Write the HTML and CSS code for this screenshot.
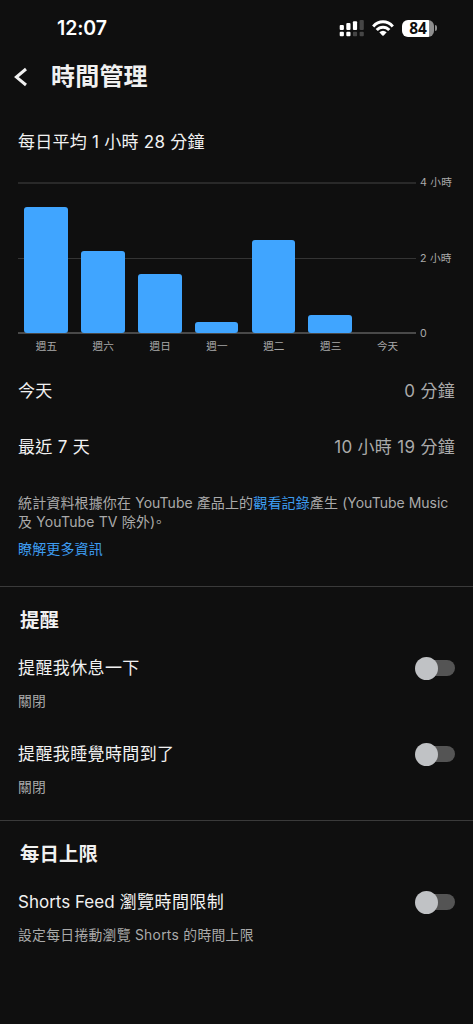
FILE: index.html
```html
<!DOCTYPE html>
<html lang="zh-Hant">
<head>
<meta charset="utf-8">
<meta name="viewport" content="width=device-width, initial-scale=1">
<title>時間管理</title>
<link rel="stylesheet" href="styles.css">
</head>
<body>
<div class="screen">
  <div class="status">
    <span class="clock">12:07</span>
    <div class="status-icons">
      <svg class="signal" width="25" height="18" viewBox="0 0 25 18">
        <g fill="#fff"><rect x="0.7" y="6" width="4.2" height="5" rx="1"/><rect x="7.3" y="4" width="4.2" height="7" rx="1"/><rect x="13.9" y="2.2" width="4.2" height="8.8" rx="1"/><rect x="0.7" y="12.8" width="4.2" height="4.4" rx="1"/><rect x="7.3" y="12.8" width="4.2" height="4.4" rx="1"/></g>
        <g fill="#464646"><rect x="20.6" y="1" width="4.2" height="10" rx="1"/><rect x="13.9" y="12.8" width="4.2" height="4.4" rx="1"/><rect x="20.6" y="12.8" width="4.2" height="4.4" rx="1"/></g>
      </svg>
      <svg class="wifi" width="22" height="18" viewBox="0 0 22 18">
        <g fill="none" stroke="#fff" stroke-width="3"><path d="M1.2 7.4C6.8 1.3 15.2 1.3 20.8 7.4"/><path d="M4.7 11.1C8.3 7.2 13.7 7.2 17.3 11.1"/></g>
        <path fill="#fff" d="M7.3 13.3Q11 10.2 14.7 13.3L11.7 16.5Q11 17.2 10.3 16.5Z"/>
      </svg>
      <div class="battery"><span class="battery-level">84</span></div>
      <span class="battery-tip"></span>
    </div>
  </div>
  <header class="topbar">
    <svg class="back" width="16" height="20" viewBox="0 0 16 20"><path d="M13 2 3.4 10.1 13 18" fill="none" stroke="#f1f1f1" stroke-width="3"/></svg>
    <h1 class="title">時間管理</h1>
  </header>
  <p class="average">每日平均 1 小時 28 分鐘</p>
  <div class="chart">
    <div class="plot">
      <div class="lines"><i></i><i></i><i></i></div>
      <div class="bars">
        <b style="height:126px"></b><b style="height:82px"></b><b style="height:59px"></b><b style="height:11px"></b><b style="height:93px"></b><b style="height:18px"></b><b style="height:0"></b>
      </div>
    </div>
    <div class="scale"><span>4 小時</span><span>2 小時</span><span>0</span></div>
    <div class="days"><span>週五</span><span>週六</span><span>週日</span><span>週一</span><span>週二</span><span>週三</span><span>今天</span></div>
  </div>
  <div class="stat"><span>今天</span><span class="value">0 分鐘</span></div>
  <div class="stat"><span>最近 7 天</span><span class="value">10 小時 19 分鐘</span></div>
  <p class="note">統計資料根據你在 <span class="latin">YouTube</span> 產品上的<a class="link">觀看記錄</a>產生 <span class="latin">(YouTube Music</span><br>及 YouTube TV 除外)<span class="stop">。</span></p>
  <p class="more"><a class="link">瞭解更多資訊</a></p>
  <section class="section section-reminders">
    <h2 class="heading">提醒</h2>
    <div class="setting">
      <div class="setting-text"><div class="label">提醒我休息一下</div><div class="sub">關閉</div></div>
      <div class="toggle"><span class="knob"></span></div>
    </div>
    <div class="setting">
      <div class="setting-text"><div class="label">提醒我睡覺時間到了</div><div class="sub">關閉</div></div>
      <div class="toggle"><span class="knob"></span></div>
    </div>
  </section>
  <section class="section section-limit">
    <h2 class="heading">每日上限</h2>
    <div class="setting">
      <div class="setting-text"><div class="label"><span class="latin">Shorts Feed</span> 瀏覽時間限制</div><div class="sub">設定每日捲動瀏覽 Shorts 的時間上限</div></div>
      <div class="toggle"><span class="knob"></span></div>
    </div>
  </section>
</div>
</body>
</html>
```
FILE: styles.css
```css
* { box-sizing: border-box; }
body { margin: 0; background: #0f0f0f; }
h1, h2, p { margin: 0; }
.screen {
  width: 473px;
  height: 1024px;
  overflow: hidden;
  background: #0f0f0f;
  color: #f1f1f1;
  font: 400 17px/24px Inter, "Noto Sans CJK TC", sans-serif;
  letter-spacing: .38px;
  white-space: nowrap;
}
.latin { letter-spacing: 0; }
.status { display: flex; justify-content: space-between; height: 53px; padding: 16px 36px 0 57px; }
.clock { font-size: 19.5px; font-weight: 600; letter-spacing: -.1px; color: #fff; }
.status-icons { display: flex; height: 24px; align-items: center; }
.wifi { margin: 0 8px 0 8px; }
.battery {
  width: 32px; height: 17px; border-radius: 6px;
  background: linear-gradient(90deg, #fff 84%, #8e8e8e 84%);
  color: #0f0f0f; text-align: center;
}
.battery-level { display: block; font-family: "Open Sans", sans-serif; font-size: 15.5px; font-weight: 700; line-height: 17px; letter-spacing: 0; }
.battery-tip { width: 2px; height: 6px; margin-left: 1px; border-radius: 0 3px 3px 0; background: #8e8e8e; }
.topbar { display: flex; align-items: center; height: 48px; padding-left: 13px; }
.title { margin-left: 22px; font-size: 24px; line-height: 34px; font-weight: 600; letter-spacing: .2px; }
.average { height: 82px; padding: 29px 0 0 18px; letter-spacing: .25px; }
.chart { display: grid; grid-template-columns: 398px 1fr; grid-template-rows: 150px 42px; padding-left: 18px; }
.plot { display: grid; }
.lines, .bars { grid-area: 1 / 1; }
.lines { display: flex; flex-direction: column; justify-content: space-between; margin: -1px 0; }
.lines i { height: 1px; background: #343434; }
.lines i:first-child { height: 2px; background: #292929; }
.lines i:last-child { height: 2px; background: #494949; }
.bars { display: flex; align-items: flex-end; }
.bars b { width: 43.7px; margin: 0 6.88px 0 6.28px; border-radius: 3px; background: #40a5ff; }
.scale {
  display: flex; flex-direction: column; justify-content: space-between;
  margin: -8px 0 -9px; padding-left: 4px;
  font-size: 10.7px; line-height: 16px; letter-spacing: .2px; color: #aaa;
}
.days {
  display: grid; grid-template-columns: repeat(7, 1fr); padding-top: 5px;
  font-size: 10.6px; line-height: 17px; letter-spacing: .1px; text-align: center; color: #aaa;
}
.stat { display: flex; justify-content: space-between; height: 56px; padding: 4px 18px 0; letter-spacing: .3px; }
.value { color: #aaa; }
.note, .more { padding-left: 18px; font-size: 14px; line-height: 19px; letter-spacing: .14px; color: #aaa; }
.note { margin-top: 6px; }
.note .latin { letter-spacing: 0; }
.stop { font-feature-settings: "halt"; }
.more { height: 55px; padding-top: 8px; }
.link { color: #3d9cf0; }
.section { height: 235px; border-top: 1px solid #3a3a3a; }
.section-reminders { height: 234px; }
.heading { height: 54px; padding: 20px 0 0 20px; font-size: 19.4px; line-height: 27px; font-weight: 600; letter-spacing: .1px; }
.setting { display: flex; justify-content: space-between; height: 86px; padding: 15px 18px 0; }
.sub { margin-top: 11px; font-size: 13.8px; line-height: 20px; letter-spacing: .3px; color: #aaa; }
.toggle { display: flex; align-items: center; width: 38px; height: 16px; margin-top: 4px; border-radius: 8px; background: #545454; }
.knob { flex: none; width: 23px; height: 23px; margin-left: -2px; border-radius: 50%; background: #c0c2c5; }
```
